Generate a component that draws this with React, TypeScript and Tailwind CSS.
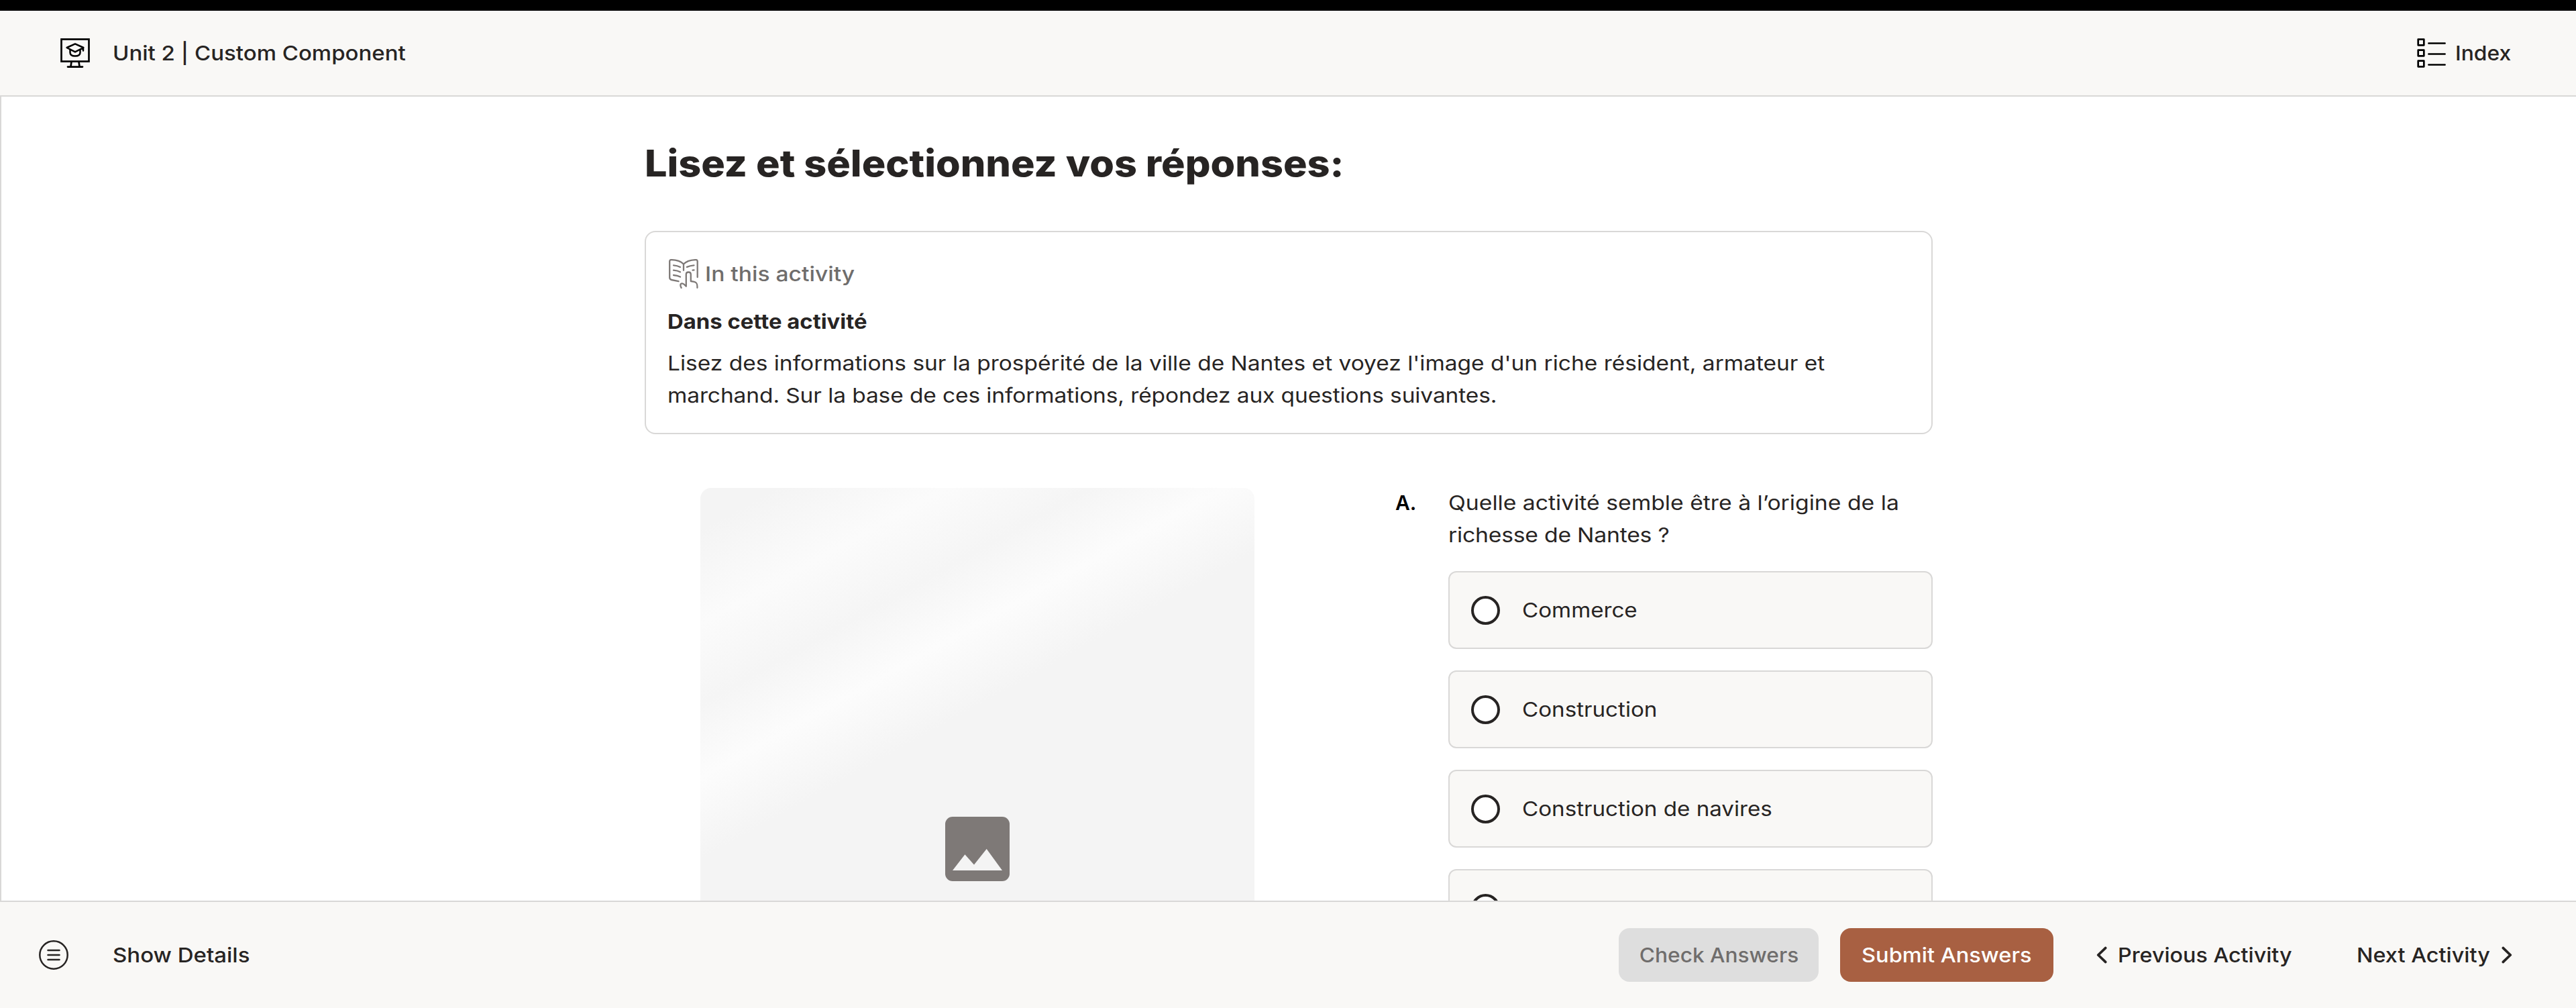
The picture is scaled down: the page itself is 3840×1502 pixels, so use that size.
import React from "react";

const OPTIONS = ["Commerce", "Construction", "Construction de navires", ""];

function CourseIcon() {
  return (
    <svg viewBox="0 0 44 44" className="size-11 shrink-0" fill="none" stroke="#000" strokeWidth="2.7" strokeLinejoin="round" strokeLinecap="round">
      <rect x="1.5" y="1.5" width="41" height="33" strokeLinejoin="miter" />
      <path d="M16.5 35 15.5 42M27.5 35 28.5 42M11 42.6h22" />
      <path d="M9.6 14 22 8.4 34.4 14 22 20.4zM34 14v4.6" strokeWidth="2.5" />
      <path d="M14.5 17v4.2c0 3.4 2.8 5.3 7.5 5.3s7.5-1.9 7.5-5.3V17" strokeWidth="2.5" />
    </svg>
  );
}

function IndexIcon() {
  return (
    <svg viewBox="0 0 44 44" className="size-11 shrink-0" fill="none" stroke="#000" strokeWidth="2.7" strokeLinecap="round" strokeLinejoin="round">
      <rect x="1.7" y="1.7" width="8.6" height="8.6" />
      <rect x="1.7" y="17.7" width="8.6" height="8.6" />
      <rect x="1.7" y="33.7" width="8.6" height="8.6" />
      <path d="M17.3 7.5h24.4M17.3 23.5h24.4M17.3 39.5h24.4" strokeWidth="2.4" />
    </svg>
  );
}

function BookIcon() {
  return (
    <svg viewBox="0 0 44 44" className="size-11 shrink-0" fill="none" stroke="#7e7977" strokeWidth="2.3" strokeLinecap="round" strokeLinejoin="round">
      <path d="M14.5 33.2 4 31Q1.2 30.4 1.2 27.6V3.6Q1.2 1 4 1.1C11 1.4 18 3.2 22 7.6 26 3.2 33 1.4 40 1.1Q42.7 1 42.7 3.6V27" />
      <path d="M22 7.6v9.2M7 9.3q6 .4 10 2.6M7 16.6q6 .4 10 2.6M7 24q6 .4 10 2.6M37.5 9.3q-6 .4-10.5 2.6M37.5 16.4l-2 .3" />
      <path d="M18.6 42.8c-2-3.4-1.6-6.6 1.4-6.4 2.4.2 3.6 2 5.8 4.2V22.8c0-4.4 7-4.4 7 0V33l5 .8c3.6.7 5 2.6 4.6 9" />
    </svg>
  );
}

function Chevron({ flip = false }: { flip?: boolean }) {
  return (
    <svg viewBox="0 0 16 26" className={flip ? "h-[26px] w-4 shrink-0 rotate-180" : "h-[26px] w-4 shrink-0"} fill="none" stroke="#272423" strokeWidth="3.8" strokeLinecap="round" strokeLinejoin="round">
      <path d="M13.6 2.6 2.8 13l10.8 10.4" />
    </svg>
  );
}

export default function App() {
  return (
    <div className="flex h-[1502px] w-[3840px] flex-col overflow-hidden bg-white font-[Inter,sans-serif] text-[30px] leading-[48px] text-[#272423]">
      <div className="h-4 shrink-0 bg-black" />
      <header className="flex h-32 shrink-0 items-center justify-between border-b-2 border-[#d9d8d7] bg-[#f9f8f6] pr-[94px] pl-[90px] font-medium">
        <div className="flex items-center gap-[34px]">
          <CourseIcon />
          <span className="origin-left scale-x-[1.1]">Unit 2 | Custom Component</span>
        </div>
        <div className="flex items-center gap-[13px]">
          <IndexIcon />
          <span className="w-[86px]"><span className="inline-block origin-left scale-x-[1.06]">Index</span></span>
        </div>
      </header>

      <main className="min-h-0 flex-1 overflow-hidden border-l-2 border-[#d9d8d7]">
        <div className="mx-auto flex w-[1920px] flex-col">
          <h1 className="mt-[59px] mb-px origin-left scale-x-[1.078] whitespace-nowrap text-[55px] leading-[80px] font-extrabold">
            Lisez et sélectionnez vos réponses:
          </h1>

          <section className="mt-[60px] h-[303px] rounded-2xl border-2 border-[#d9d8d7] pt-[38px] pl-8">
            <div className="ml-0.5 flex items-center gap-[10px] font-medium text-[#6f6d6c]">
              <BookIcon />
              <span className="origin-left scale-x-[1.12]">In this activity</span>
            </div>
            <h2 className="mt-[23px] origin-left scale-x-[1.095] font-bold">Dans cette activité</h2>
            <p className="mt-3.5 origin-left scale-x-[1.116] whitespace-nowrap">
              Lisez des informations sur la prospérité de la ville de Nantes et voyez l'image d'un riche résident, armateur et
              <br />
              <span className="tracking-[-0.09px]">marchand. Sur la base de ces informations, répondez aux questions suivantes.</span>
            </p>
          </section>

          <div className="mt-[78px] flex">
            <div className="mt-0.5 ml-[83px] flex h-[1076px] w-[826px] shrink-0 items-center justify-center rounded-2xl bg-[linear-gradient(151deg,#f4f4f4_55px,#fbfbfb_178px,#f5f5f5_282px,#fcfcfc_378px,#f4f4f4_485px)]">
              <svg viewBox="0 0 96 96" className="size-24">
                <rect width="96" height="96" rx="11" fill="#7e7977" />
                <path d="M11 80 29.4 56.3 43 71.4 61.7 48 85 80z" fill="#f4f4f4" />
              </svg>
            </div>
            <span className="ml-[210px] w-[79px] shrink-0 font-semibold text-black">A.</span>
            <div className="flex flex-1 flex-col">
              <p className="origin-left scale-x-[1.124] whitespace-nowrap">
                Quelle activité semble être à l’origine de la
                <br />
                <span className="tracking-[-0.2px]">richesse de Nantes ?</span>
              </p>
              <div className="mt-[30px] flex flex-col gap-8">
                {OPTIONS.map((option, i) => (
                  <div key={i} className="flex h-[116px] items-center gap-[33px] rounded-xl border-2 border-[#d9d8d7] bg-[#f9f8f6] pl-8">
                    <span className="size-[43px] rounded-full border-4 border-[#272423] bg-white" />
                    <span className="origin-left scale-x-[1.105]">{option}</span>
                  </div>
                ))}
              </div>
            </div>
          </div>
        </div>
      </main>

      <footer className="flex h-40 shrink-0 items-center border-t-2 border-[#d9d8d7] bg-[#f9f8f6] pr-[95px] pl-[58px] font-medium">
        <svg viewBox="0 0 44 44" className="size-11 shrink-0" fill="none" stroke="#272423" strokeWidth="2.5" strokeLinecap="round">
          <circle cx="22" cy="22" r="20.7" />
          <path d="M13.5 15h17M13.5 22h17M13.5 29h17" />
        </svg>
        <span className="ml-[66px] origin-left scale-x-[1.1]">Show Details</span>
        <button className="ml-auto h-20 w-[298px] rounded-2xl bg-[#dedede] text-[#6f6d6c]">
          <span className="inline-block scale-x-[1.055]">Check Answers</span>
        </button>
        <button className="ml-8 h-20 w-[318px] rounded-2xl bg-[#a86042] text-white">
          <span className="inline-block scale-x-[1.085]">Submit Answers</span>
        </button>
        <div className="ml-16 flex items-center gap-4">
          <Chevron />
          <span className="w-[259px] whitespace-nowrap"><span className="inline-block origin-left scale-x-[1.075]">Previous Activity</span></span>
        </div>
        <div className="ml-[97px] flex items-center gap-[15px]">
          <span className="w-[201px] whitespace-nowrap"><span className="inline-block origin-left scale-x-[1.08]">Next Activity</span></span>
          <Chevron flip />
        </div>
      </footer>
    </div>
  );
}
